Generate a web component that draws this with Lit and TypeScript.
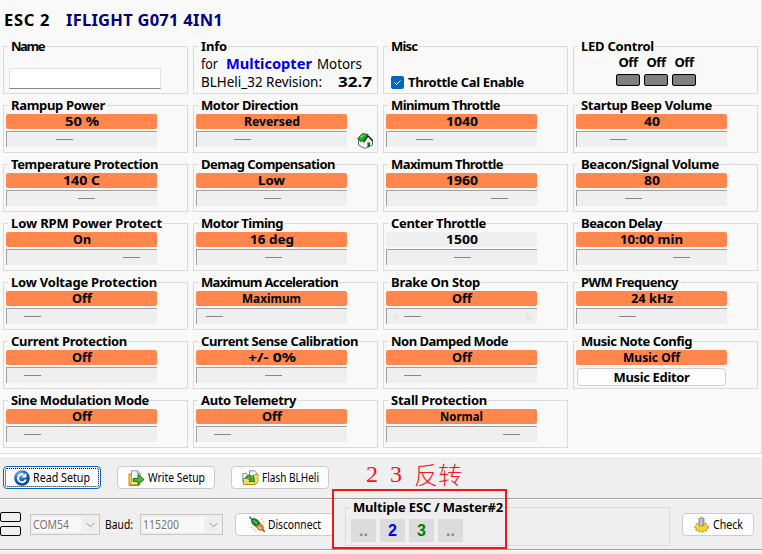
import { LitElement, html, css, svg, nothing } from "lit";
import { customElement, property } from "lit/decorators.js";

/** Text that spans a given width, either by tracking or by condensing its glyphs. */
@customElement("fit-text")
class FitText extends LitElement {
  @property({ type: Number }) width = 0;
  @property() text = "";
  @property({ type: Boolean }) condense = false;
  static styles = css`
    :host { display: inline-block; white-space: pre; flex: none; }
    .ink { display: inline-block; transform-origin: 0 50%; }
  `;
  render() {
    return html`<span class="ink">${this.text}</span>`;
  }
  updated() {
    const ink = this.renderRoot.querySelector(".ink") as HTMLElement;
    const natural = ink.getBoundingClientRect().width;
    if (this.condense) {
      ink.style.transform = `scaleX(${this.width / natural})`;
    } else {
      ink.style.letterSpacing = `${(this.width - natural) / this.text.length}px`;
    }
    this.style.width = `${this.width}px`;
  }
}

const t = (text: string, width: number) => html`<fit-text .text=${text} .width=${width}></fit-text>`;
const c = (text: string, width: number) => html`<fit-text .text=${text} .width=${width} .condense=${true}></fit-text>`;

interface Setting {
  label: string; lw: number; value: string; vw: number; thumb: number;
  extra?: "home" | "arrows" | "plain" | "editor";
}
const s = (label: string, lw: number, value: string, vw: number, thumb: number, extra?: Setting["extra"]): Setting =>
  ({ label, lw, value, vw, thumb, extra });

const SETTINGS: Setting[] = [
  s("Rampup Power", 94, "50 %", 34, 49), s("Motor Direction", 97, "Reversed", 56, 37, "home"),
  s("Minimum Throttle", 109, "1040", 32, 29), s("Startup Beep Volume", 131, "40", 16, 33),
  s("Temperature Protection", 147, "140 C", 37, 71), s("Demag Compensation", 134, "Low", 27, 67),
  s("Maximum Throttle", 112, "1960", 32, 104), s("Beacon/Signal Volume", 138, "80", 16, 48),
  s("Low RPM Power Protect", 151, "On", 18, 116), s("Motor Timing", 82, "16 deg", 44, 68),
  s("Center Throttle", 95, "1500", 32, 67, "plain"), s("Beacon Delay", 81, "10:00 min", 63, 96),
  s("Low Voltage Protection", 146, "Off", 20, 17), s("Maximum Acceleration", 137, "Maximum", 59, 9),
  s("Brake On Stop", 89, "Off", 20, 17, "arrows"), s("PWM Frequency", 97, "24 kHz", 42, 42),
  s("Current Protection", 116, "Off", 20, 17), s("Current Sense Calibration", 157, "+/- 0%", 48, 68),
  s("Non Damped Mode", 117, "Off", 20, 17), s("Music Note Config", 111, "Music Off", 57, 0, "editor"),
  s("Sine Modulation Mode", 138, "Off", 20, 17), s("Auto Telemetry", 95, "Off", 20, 17),
  s("Stall Protection", 96, "Normal", 43, 116),
];

const home = svg`<svg class="home" width="17" height="17" viewBox="0 0 17 17">
  <path d="M1.500 7v6l6 3.500 8-3.500V8L11 3.500z" fill="#e9f3ea" stroke="#555" stroke-width=".9"/>
  <path d="M.800 6.500L5.500 1.500l5.500 1-4 6-3.500 1z" fill="#22a822" stroke="#075b07" stroke-width=".8"/>
  <path d="M6.500 10.500L11 4l4.800 5" fill="none" stroke="#111" stroke-width="1.200"/>
  <path d="M10.500 10.500h2.500v4l-2.500 1z" fill="#0a6a1a"/><path d="M3.500 5.500L7 3" stroke="#7df07d" stroke-width="1.200"/></svg>`;
const readIcon = svg`<svg width="16" height="16" viewBox="0 0 16 16">
  <defs><radialGradient id="b" cx=".35" cy=".25" r=".8"><stop offset="0" stop-color="#7eb9f2"/><stop offset=".5" stop-color="#1c66c4"/><stop offset="1" stop-color="#073c92"/></radialGradient></defs>
  <circle cx="8" cy="8" r="7.800" fill="url(#b)"/>
  <path d="M11.800 9.500A4 4 0 1 1 9.600 4.600" fill="none" stroke="#fff" stroke-width="1.800"/>
  <path d="M7.500 7.600h4.800V2.800z" fill="#fff"/></svg>`;
const writeIcon = svg`<svg width="17" height="16" viewBox="0 0 17 16">
  <path d="M1 4h3v10h8l-1 1.500H1z" fill="#f4d45c" stroke="#b18a1a"/>
  <path d="M3.500.800h6l3 3V13h-9z" fill="#f3f8ff" stroke="#7d9cc9"/>
  <path d="M9.500.800v3h3" fill="#c9dcf5" stroke="#7d9cc9"/>
  <path d="M2 14.500L4.500 9.500H12l-1.500 5z" fill="#fbe386" stroke="#b9952a" stroke-width=".8"/>
  <path d="M5.500 8.500H10V4.500l6 5-6 5v-3H5.500z" fill="#4fbb35" stroke="#157016"/></svg>`;
const flashIcon = svg`<svg width="17" height="16" viewBox="0 0 17 16">
  <path d="M.800 3.500h4l1 1V12h-5z" fill="#eef6ff" stroke="#7d9cc9"/>
  <path d="M7.500.800h5l2.500 2.500V9H7.500z" fill="#eef6ff" stroke="#6f92c4"/>
  <path d="M1.500 14.500V8.500H5l1 1h7v5z" fill="#f8db69" stroke="#b18a1a"/>
  <path d="M12 4.500h4V12l-3 2.500" fill="#f8db69" stroke="#b18a1a" stroke-width=".8"/>
  <path d="M3.500 8c1-3 4-4 6.500-1.500l1.500-1.500 1 6.500H7l1.500-2C7.500 7.500 5.500 7.500 3.500 8z" fill="#42b52d" stroke="#126c14" stroke-width=".8"/></svg>`;
const plugIcon = svg`<svg width="17" height="17" viewBox="0 0 17 17">
  <path d="M.500.800L4 4.500" stroke="#2f6a35" stroke-width="1.400"/>
  <path d="M15.800 15.800L13 13" stroke="#9b4a12" stroke-width="1.600"/>
  <path d="M2.500 4.500Q3 2.500 5 2.500L8.500 4 11 7 7 10.500 3.500 8z" fill="#1d8a34" stroke="#0b5219" stroke-width=".8"/>
  <path d="M4.500 4.500l3.500 3" stroke="#6fd07a" stroke-width="1.200"/>
  <path d="M7.500 11l4-3.500 2.500 2.500.3 3-1.300 1.300-3-.4z" fill="#f28a36" stroke="#ae4f10" stroke-width=".8"/>
  <path d="M9.500 11l2.500 2" stroke="#ffd09c" stroke-width="1.100"/>
  <path d="M12 4l1.500-2M13.500 6.500l2-.8M5.500 12l-2 2M7 13.500l-.5 2M3.500 11l-2 .5" stroke="#f0c23a" stroke-width="1"/></svg>`;
const checkIcon = svg`<svg width="16" height="17" viewBox="0 0 16 17">
  <ellipse cx="7.500" cy="11" rx="6.300" ry="4.600" fill="#f1c52d" stroke="#c4941a" stroke-width="1.600" stroke-dasharray="2 1.200"/>
  <ellipse cx="7.500" cy="10.500" rx="5.800" ry="4.200" fill="#f6d23b"/>
  <path d="M5 2.500Q7.500.300 10 2.500V9.500q-2.500 1.500-5 0z" fill="#a7abb3" stroke="#7c8088" stroke-width=".8"/>
  <path d="M7 2.500v7" stroke="#dfe2e6"/></svg>`;
const chevron = svg`<svg class="chev" width="9" height="6" viewBox="0 0 9 6"><path d="M.5.8l4 4 4-4" fill="none" stroke="#9a9a9a"/></svg>`;

@customElement("app-root")
class AppRoot extends LitElement {
  static styles = css`
    :host {
      display: flex; flex-direction: column; box-sizing: border-box; width: 762px; height: 554px;
      overflow: hidden; background: #efefef; color: #000;
      font: 13px/16px "Noto Sans", "Open Sans", sans-serif;
    }
    svg { display: block; flex: none; }
    .panel { height: 454px; flex: none; box-sizing: border-box; background: #f9f9f9;
      border-right: 1px solid #e0e0e0; border-bottom: 1px solid #e0e0e0; padding: 9px 0 0 3px; }
    .edge { height: 3px; flex: none; background: #fdfdfd; }
    .head { display: flex; height: 37px; padding-left: 1px; font-size: 16.500px; line-height: 22px; font-weight: 700; }
    .board { color: #000080; margin-left: 16px; }
    .grid { display: grid; grid-template-columns: repeat(4, 185px); grid-auto-rows: 48px; gap: 11px 5px; }
    .group { border: 1px solid #dadada; box-sizing: border-box; min-width: 0; display: flex; flex-direction: column; padding-left: 2px; }
    .title { display: block; align-self: flex-start; margin: -9px 0 0 2px; padding: 0 1px 0 3px; height: 17px; background: #f9f9f9;
      font-weight: 700; line-height: 17px; }
    .bar { width: 151px; height: 15px; border-radius: 2px; background: #ff874d; display: flex; justify-content: center;
      font-weight: 700; line-height: 15px; }
    .bar.plain { background: #efefef; }
    .line { display: flex; }
    .track { box-sizing: border-box; width: 151px; height: 16px; margin-top: 2px; background: #efefef; border-top: 1px solid #a0a0a0;
      border-left: 1px solid #a0a0a0; display: flex; align-items: flex-start; position: relative; }
    .thumb { width: 17px; height: 1px; margin-top: 7px; background: #868686; }
    .arrow { position: absolute; top: 4px; border: 4px solid transparent; }
    .arrow.l { left: 1px; border-right: 6px solid #e4e8e4; }
    .arrow.r { right: 1px; border-left: 6px solid #e4e8e4; }
    .home { margin: 3px 0 0 10px; }
    .editor { box-sizing: border-box; width: 149px; height: 18px; margin: 3px 0 0 1px; border: 1px solid #cfcfcf; border-radius: 4px;
      background: #fdfdfd; display: flex; justify-content: center; font-weight: 700; line-height: 16px; }
    .name { box-sizing: border-box; width: 152px; height: 21px; margin: 13px 0 0 3px; background: #fff; border: 1px solid #e4e4e4; border-bottom-color: #868686; }
    .info { display: flex; padding-left: 5px; font-size: 15px; height: 18px; line-height: 16px; }
    .info b { color: #0000e8; margin: 0 5px 0 8px; }
    .info b.rev { color: #000; margin: 0 0 0 16px; }
    .check { display: flex; align-items: center; gap: 4px; margin: 19px 0 0 5px; font-weight: 700; height: 16px; }
    .box { width: 13px; height: 13px; border-radius: 2px; background: #0067c0; }
    .leds { display: flex; gap: 4px; margin: -1px 0 0 40px; font-weight: 700; }
    .led { width: 24px; display: flex; flex-direction: column; align-items: center; }
    .led i { box-sizing: border-box; width: 24px; height: 12px; margin-top: 4px; background: #808080; border: 1px solid #000; border-radius: 2px; }
    .tools { display: flex; gap: 16px; height: 41px; flex: none; box-sizing: border-box; padding: 9px 3px 0; }
    .btn { box-sizing: border-box; width: 98px; height: 23px; border: 1px solid #cbcbcb; border-radius: 4px; background: #fdfdfd;
      display: flex; align-items: center; padding-left: 10px; gap: 3px; font-size: 12.500px; }
    .focus { border-color: #0067c0; outline: 1px dotted #000; outline-offset: -3px; }
    .rule { height: 1px; flex: none; background: #a0a0a0; border-bottom: 1px solid #fff; }
    .status { display: flex; height: 49px; flex: none; align-items: flex-start; font-size: 12.500px; }
    .ports { display: flex; flex-direction: column; gap: 4px; margin-top: 12px; }
    .ports i { box-sizing: border-box; width: 21px; height: 10px; border: 1px solid #000; border-radius: 2px; }
    .select { box-sizing: border-box; height: 21px; margin-top: 14px; border: 1px solid #c6c6c6; background: #efefef; display: flex;
      align-items: center; justify-content: space-between; padding: 0 4px 0 2px; color: #777; flex: none; }
    .field { background: #f8f8f8; height: 15px; line-height: 15px; display: flex; }
    .com { width: 70px; margin-left: 9px; } .com .field { width: 48px; }
    .rate { width: 83px; margin-left: 7px; } .rate .field { width: 61px; }
    .baud { margin: 17px 0 0 5px; }
    .status .btn { margin: 13px 0 0 12px; flex: none; }
    .status .dis { width: 99px; padding-left: 13px; gap: 2px; }
    .multi { box-sizing: border-box; flex: none; width: 325px; height: 39px; margin: 7px 0 0 11px; border: 1px solid #dadada; padding-left: 5px; }
    .multi .title { width: max-content; background: #efefef; font-size: 13px; margin: -9px 0 0 -1px; }
    .cells { display: flex; gap: 4px; margin-top: 3px; }
    .cell { width: 25px; height: 23px; background: #dcdcdc; text-align: center; font: 700 16px/23px "Liberation Sans", Arial, sans-serif; color: #8a8a8a; }
    .blue { color: #0000f0; } .green { color: #008000; }
    .status .chk { width: 72px; padding-left: 11px; }
    .mark { position: absolute; left: 332px; top: 489px; width: 171px; height: 56px; border: 2px solid #f01818; }
    .note { position: absolute; left: 366px; top: 460px; color: #f01818; font: 300 24px/28px "Liberation Serif", "Noto Sans CJK SC", serif; white-space: nowrap; display: flex; }
    .note .n { width: 24px; } .note .cn { font-family: "Noto Sans CJK SC", sans-serif; }
  `;

  private setting(x: Setting) {
    return html`<section class="group">
      <div class="title">${t(x.label, x.lw)}</div>
      <div class="bar ${x.extra === "plain" ? "plain" : ""}">${c(x.value, x.vw)}</div>
      ${x.extra === "editor"
        ? html`<div class="editor">${t("Music Editor", 76)}</div>`
        : html`<div class="line"><div class="track">
            ${x.extra === "arrows" ? html`<i class="arrow l"></i><i class="arrow r"></i>` : nothing}
            <div class="thumb" style="margin-left:${x.thumb}px"></div></div>
            ${x.extra === "home" ? home : nothing}</div>`}
    </section>`;
  }

  render() {
    return html`
      <main class="panel">
        <header class="head">${t("ESC 2", 46)}<span class="board">${t("IFLIGHT G071 4IN1", 157)}</span></header>
        <div class="grid">
          <section class="group"><div class="title">${t("Name", 33)}</div><div class="name"></div></section>
          <section class="group"><div class="title">${t("Info", 26)}</div>
            <div class="info">${c("for", 17)}<b>${c("Multicopter", 86)}</b>${c("Motors", 45)}</div>
            <div class="info">${c("BLHeli_32 Revision:", 121)}<b class="rev">${c("32.7", 34)}</b></div></section>
          <section class="group"><div class="title">${t("Misc", 26)}</div>
            <div class="check"><span class="box"><svg width="13" height="13" viewBox="0 0 13 13"><path d="M3.500 6.500l2 2 4-4" fill="none" stroke="#fff"/></svg></span>${t("Throttle Cal Enable", 116)}</div></section>
          <section class="group"><div class="title">${t("LED Control", 73)}</div>
            <div class="leds">${[0, 1, 2].map(() => html`<div class="led">${t("Off", 19)}<i></i></div>`)}</div></section>
          ${SETTINGS.map((x) => this.setting(x))}
        </div>
      </main>
      <div class="edge"></div>
      <div class="tools">
        <div class="btn focus">${readIcon}${c("Read Setup", 57)}</div>
        <div class="btn">${writeIcon}${c("Write Setup", 57)}</div>
        <div class="btn">${flashIcon}${c("Flash BLHeli", 57)}</div>
      </div>
      <div class="rule"></div>
      <div class="status">
        <div class="ports"><i></i><i></i></div>
        <div class="select com"><span class="field">${c("COM54", 36)}</span>${chevron}</div>
        <span class="baud">${c("Baud:", 28)}</span>
        <div class="select rate"><span class="field">${c("115200", 36)}</span>${chevron}</div>
        <div class="btn dis">${plugIcon}${c("Disconnect", 53)}</div>
        <div class="multi"><div class="title">${t("Multiple ESC / Master#2", 150)}</div>
          <div class="cells"><span class="cell">..</span><span class="cell blue">2</span><span class="cell green">3</span><span class="cell">..</span></div></div>
        <div class="btn chk">${checkIcon}${c("Check", 30)}</div>
      </div>
      <div class="rule"></div>
      <div class="mark"></div>
      <div class="note"><span class="n">2</span><span class="n">3</span><span class="cn">反转</span></div>
    `;
  }
}
